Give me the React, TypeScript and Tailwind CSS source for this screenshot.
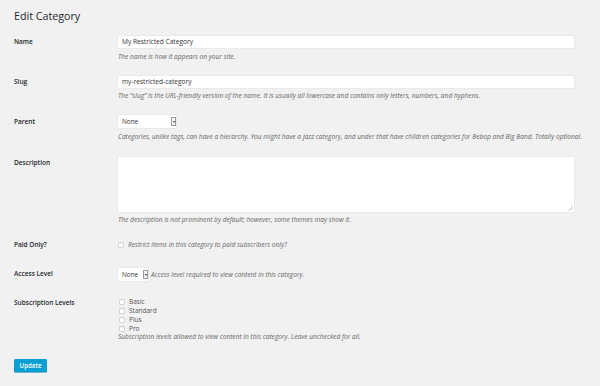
import React from "react";

function SelectBox({ value, width }: { value: string; width: string }) {
  return (
    <div
      className={`flex h-[13px] ${width} items-stretch bg-white shadow-[0_0_0_0.5px_#e2e2e2]`}
    >
      <div className="flex flex-1 items-center pl-[4px] text-[6.4px] text-[#333]">
        {value}
      </div>
      <div className="my-[2px] flex w-[5px] items-center justify-center border border-[#999] bg-[#f7f7f7]">
        <div className="h-0 w-0 border-x-[1.5px] border-t-[2px] border-x-transparent border-t-[#333]" />
      </div>
    </div>
  );
}

function Checkbox() {
  return (
    <span className="inline-block h-[6px] w-[6px] shrink-0 rounded-[1px] border border-[#d4d4d4] bg-white shadow-[inset_0_1px_1px_rgba(0,0,0,0.06)]" />
  );
}

function Hint({ children }: { children: React.ReactNode }) {
  return (
    <p className="h-[8px] text-[6.6px] leading-[8px] whitespace-nowrap text-[#666] italic">
      {children}
    </p>
  );
}

function Label({ children, className = "" }: { children: React.ReactNode; className?: string }) {
  return (
    <div
      className={`w-[104px] shrink-0 text-[6.5px] font-semibold text-[#23282d] ${className}`}
    >
      {children}
    </div>
  );
}

export default function App() {
  const levels = ["Basic", "Standard", "Plus", "Pro"];

  return (
    <div className="h-[386px] w-[600px] overflow-hidden bg-[#f1f1f1] px-[14px] pt-[10px] font-['Open_Sans',sans-serif]">
      {/* Header */}
      <h1 className="h-[12px] text-[10.7px] leading-[12px] font-normal text-[#23282d]">
        Edit Category
      </h1>

      {/* Name */}
      <div className="mt-[14px] flex">
        <Label className="leading-[12px]">Name</Label>
        <div className="w-[456px]">
          <div className="flex h-[12px] items-center bg-white pl-[4px] text-[6.6px] text-[#333] shadow-[0_0_0_0.5px_#e4e4e4]">
            My Restricted Category
          </div>
          <div className="mt-[5px]">
            <Hint>The name is how it appears on your site.</Hint>
          </div>
        </div>
      </div>

      {/* Slug */}
      <div className="mt-[15px] flex">
        <Label className="leading-[12px]">Slug</Label>
        <div className="w-[456px]">
          <div className="flex h-[12px] items-center bg-white pl-[4px] text-[6.6px] text-[#333] shadow-[0_0_0_0.5px_#e4e4e4]">
            my-restricted-category
          </div>
          <div className="mt-[4px]">
            <Hint>
              The “slug” is the URL-friendly version of the name. It is usually all lowercase and
              contains only letters, numbers, and hyphens.
            </Hint>
          </div>
        </div>
      </div>

      {/* Parent */}
      <div className="mt-[15px] flex">
        <Label className="leading-[13px]">Parent</Label>
        <div className="w-[456px]">
          <SelectBox value="None" width="w-[58px]" />
          <div className="mt-[5px]">
            <Hint>
              Categories, unlike tags, can have a hierarchy. You might have a Jazz category, and
              under that have children categories for Bebop and Big Band. Totally optional.
            </Hint>
          </div>
        </div>
      </div>

      {/* Description */}
      <div className="mt-[16px] flex">
        <Label className="pt-[1px] leading-[10px]">Description</Label>
        <div className="w-[456px]">
          <div className="relative h-[55px] bg-white shadow-[0_0_0_0.5px_#e4e4e4]">
            <svg
              className="absolute right-[1px] bottom-[1px]"
              width="5"
              height="5"
              viewBox="0 0 5 5"
            >
              <path d="M4.5 0.5 L0.5 4.5 M4.5 2.5 L2.5 4.5" stroke="#999" strokeWidth="0.6" />
            </svg>
          </div>
          <div className="mt-[4px]">
            <Hint>The description is not prominent by default; however, some themes may show it.</Hint>
          </div>
        </div>
      </div>

      {/* Paid Only */}
      <div className="mt-[16px] flex">
        <Label className="leading-[10px]">Paid Only?</Label>
        <div className="flex h-[10px] items-center gap-[4px]">
          <Checkbox />
          <Hint>Restrict items in this category to paid subscribers only?</Hint>
        </div>
      </div>

      {/* Access Level */}
      <div className="mt-[18px] flex">
        <Label className="leading-[12px]">Access Level</Label>
        <div className="flex items-center gap-[3px]">
          <SelectBox value="None" width="w-[30px]" />
          <Hint>Access level required to view content in this category.</Hint>
        </div>
      </div>

      {/* Subscription Levels */}
      <div className="mt-[16px] flex">
        <Label className="pt-[1px] leading-[9px]">Subscription Levels</Label>
        <div>
          {levels.map((level) => (
            <div key={level} className="flex h-[9px] items-center gap-[4px] pl-[1px]">
              <Checkbox />
              <span className="text-[6.5px] text-[#555]">{level}</span>
            </div>
          ))}
          <Hint>
            Subscription levels allowed to view content in this category. Leave unchecked for all.
          </Hint>
        </div>
      </div>

      <button className="mt-[18px] flex h-[13px] w-[33px] items-center justify-center rounded-[1.5px] bg-[#0a9fd3] text-[6.2px] font-semibold text-white shadow-[0_0.5px_0_#0073aa]">
        Update
      </button>
    </div>
  );
}
